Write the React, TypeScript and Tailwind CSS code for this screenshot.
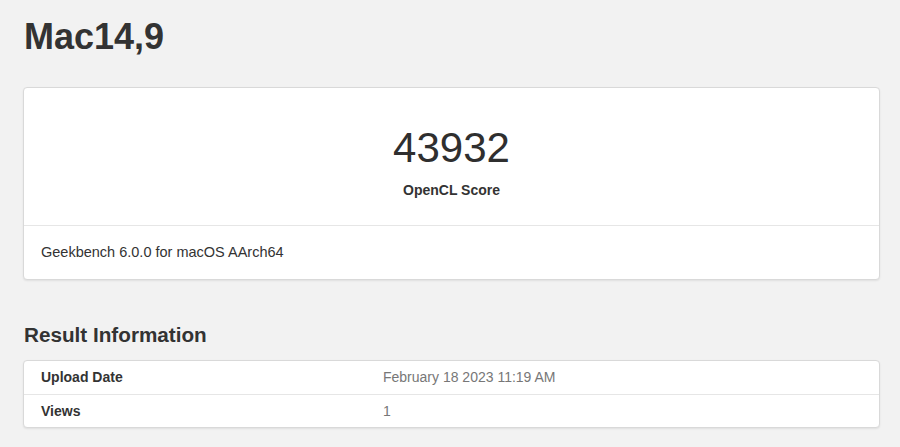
const font = { fontFamily: '"Liberation Sans", Arial, sans-serif' };

const rows = [
  { label: "Upload Date", value: "February 18 2023 11:19 AM" },
  { label: "Views", value: "1" },
];

export default function App() {
  return (
    <div
      className="min-h-[447px] bg-[#f2f2f2] pl-[23px] pr-[20px] pt-[19px] pb-4 text-[#333]"
      style={font}
    >
      <h1 className="pl-px text-[36px] leading-9 font-bold">Mac14,9</h1>

      <div className="mt-8 rounded border border-[#d9d9d9] bg-white shadow-[0_1px_2px_rgba(0,0,0,0.08)]">
        <div className="flex h-[137px] flex-col items-center pt-[39px]">
          <div className="text-[42px] leading-[42px] font-normal text-[#2f2f2f]">43932</div>
          <div className="mt-[11px] text-[14px] leading-5 font-bold">OpenCL Score</div>
        </div>
        <div className="flex h-[54px] items-center border-t border-[#e6e6e6] px-[17px] text-[14.5px]">
          Geekbench 6.0.0 for macOS AArch64
        </div>
      </div>

      <h2 className="mt-[44px] pl-px text-[20.7px] leading-[21px] font-bold">Result Information</h2>

      <div className="mt-[15px] overflow-hidden rounded border border-[#d9d9d9] bg-white shadow-[0_1px_2px_rgba(0,0,0,0.08)]">
        {rows.map((r, i) => (
          <div
            key={r.label}
            className={`flex h-[33px] items-center text-[14px] ${i > 0 ? "border-t border-[#e6e6e6]" : ""}`}
          >
            <div className="w-[40%] px-[17px] font-bold">{r.label}</div>
            <div className="flex-1 px-[17px] text-[#777]">{r.value}</div>
          </div>
        ))}
      </div>
    </div>
  );
}
